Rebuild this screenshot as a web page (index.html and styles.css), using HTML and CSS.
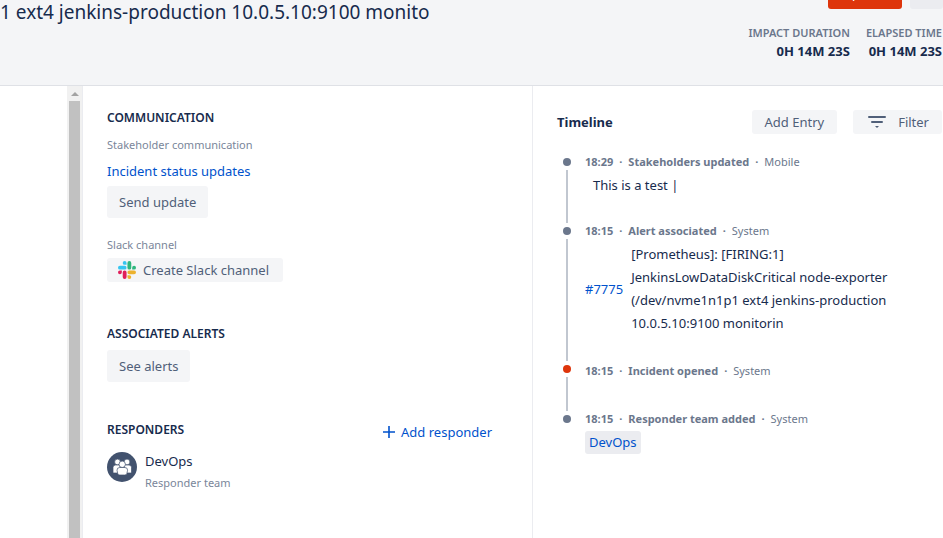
FILE: index.html
```html
<!DOCTYPE html>
<html lang="en">
<head>
<meta charset="utf-8">
<meta name="viewport" content="width=device-width, initial-scale=1">
<title>Incident details</title>
<link rel="stylesheet" href="styles.css">
</head>
<body>
<header class="header">
  <h1 class="title">1 ext4 jenkins-production 10.0.5.10:9100 monito</h1>
  <div class="summary">
    <div class="actions">
      <button class="btn btn-danger" type="button">Update</button>
      <button class="btn btn-more" type="button" aria-label="More"></button>
    </div>
    <dl class="stats">
      <div><dt>IMPACT DURATION</dt><dd>0H 14M 23S</dd></div>
      <div><dt>ELAPSED TIME</dt><dd>0H 14M 23S</dd></div>
    </dl>
  </div>
</header>
<main class="body">
  <div class="gutter"></div>
  <div class="scrollbar"><span class="arrow"></span><span class="thumb"></span></div>
  <section class="details">
    <section class="group">
      <h2>COMMUNICATION</h2>
      <p class="label">Stakeholder communication</p>
      <a class="status-link" href="#updates">Incident status updates</a>
      <button class="btn" type="button">Send update</button>
      <p class="label slack-label">Slack channel</p>
      <button class="btn btn-compact btn-slack" type="button">
        <svg class="slack" viewBox="0 0 122 122" aria-hidden="true">
          <path fill="#e01e5a" d="M26 77a13 13 0 1 1-13-13h13zM32 77a13 13 0 0 1 26 0v32a13 13 0 0 1-26 0z"/>
          <path fill="#36c5f0" d="M45 26a13 13 0 1 1 13-13v13zM45 32a13 13 0 0 1 0 26H13a13 13 0 0 1 0-26z"/>
          <path fill="#2eb67d" d="M96 45a13 13 0 1 1 13 13H96zM90 45a13 13 0 0 1-26 0V13a13 13 0 0 1 26 0z"/>
          <path fill="#ecb22e" d="M77 96a13 13 0 1 1-13 13V96zM77 90a13 13 0 0 1 0-26h32a13 13 0 0 1 0 26z"/>
        </svg>
        Create Slack channel
      </button>
    </section>
    <section class="group group-alerts">
      <h2>ASSOCIATED ALERTS</h2>
      <button class="btn" type="button">See alerts</button>
    </section>
    <section class="group">
      <div class="group-head">
        <h2>RESPONDERS</h2>
        <a class="add" href="#add">
          <svg class="plus" viewBox="0 0 12 12" aria-hidden="true"><path d="M6 0v12M0 6h12" stroke="currentColor" stroke-width="1.6"/></svg>
          Add responder
        </a>
      </div>
      <div class="responder">
        <svg class="avatar" viewBox="0 0 30 30" aria-hidden="true">
          <circle cx="15" cy="15" r="15" fill="#42526e"/>
          <g fill="#fff" stroke="#42526e" stroke-width=".7">
            <circle cx="10.5" cy="10" r="2.9"/><circle cx="20" cy="10" r="2.9"/>
            <path d="M6 21v-5.500q0-2.500 2.500-2.500H13v8zM24.500 21v-5.500q0-2.500-2.500-2.500h-4.500v8z"/>
            <circle cx="15.200" cy="12.300" r="3.200"/>
            <path d="M10 18.200q0-2.700 2.700-2.700h5.200q2.700 0 2.700 2.700l-.8 3.500q-.3 1.300-2 1.300h-5q-1.700 0-2-1.300z"/>
          </g>
        </svg>
        <div>
          <p class="name">DevOps</p>
          <p class="label">Responder team</p>
        </div>
      </div>
    </section>
  </section>
  <section class="timeline">
    <div class="timeline-head">
      <h3>Timeline</h3>
      <button class="btn btn-compact" type="button">Add Entry</button>
      <button class="btn btn-compact btn-filter" type="button">
        <svg class="funnel" viewBox="0 0 18 12" aria-hidden="true"><path d="M1 1h16M4 6h10" fill="none" stroke="currentColor" stroke-width="2" stroke-linecap="round"/><path d="M7 10h4l-2 2z" fill="currentColor"/></svg>
        Filter
      </button>
    </div>
    <ol class="entries">
      <li class="entry">
        <p class="meta"><b>18:29</b><i>·</i><b>Stakeholders updated</b><i>·</i>Mobile</p>
        <p class="text note">This is a test |</p>
      </li>
      <li class="entry associated">
        <p class="meta"><b>18:15</b><i>·</i><b>Alert associated</b><i>·</i>System</p>
        <div class="text alert"><a href="#7775">#7775</a><p>[Prometheus]: [FIRING:1] JenkinsLowDataDiskCritical node-exporter (/dev/nvme1n1p1 ext4 jenkins-production 10.0.5.10:9100 monitorin</p></div>
      </li>
      <li class="entry opened">
        <p class="meta"><b>18:15</b><i>·</i><b>Incident opened</b><i>·</i>System</p>
      </li>
      <li class="entry">
        <p class="meta"><b>18:15</b><i>·</i><b>Responder team added</b><i>·</i>System</p>
        <p class="text"><a class="chip" href="#devops">DevOps</a></p>
      </li>
    </ol>
  </section>
</main>
</body>
</html>
```
FILE: styles.css
```css
* { box-sizing: border-box; }
body, h1, h2, h3, p, dl, dd, ol { margin: 0; padding: 0; }
body {
  display: flex;
  flex-direction: column;
  height: 100vh;
  overflow: hidden;
  font: 13px/20px "Noto Sans", sans-serif;
  color: #172b4d;
  background: #fff;
}
a { color: #0052cc; text-decoration: none; }

.header {
  display: flex;
  justify-content: space-between;
  flex: none;
  background: #f4f5f7;
  border-bottom: 1px solid #dfe1e6;
}
.title { font-size: 19px; line-height: 24px; font-weight: 400; white-space: nowrap; }
.summary { margin-top: -23px; padding-bottom: 24px; }
.actions { display: flex; justify-content: flex-end; gap: 8px; margin-bottom: 16px; }
.stats { display: flex; justify-content: flex-end; gap: 16px; padding-right: 1px; text-align: right; }
dt { font-size: 11px; line-height: 16px; font-weight: 600; color: #6b778c; }
dd { font-size: 13px; line-height: 20px; font-weight: 700; }

.btn {
  display: inline-flex;
  align-items: center;
  justify-content: center;
  height: 32px;
  padding: 0 12px;
  border: 0;
  border-radius: 3px;
  background: #f4f5f7;
  color: #505f79;
  font: inherit;
  white-space: nowrap;
}
.btn-danger { min-width: 74px; background: #de350b; color: #fff; }
.btn-more { width: 33px; background: #ebecf0; }
.btn-compact { height: 24px; padding: 0 13px; }
.btn-slack { gap: 7px; padding-left: 11px; padding-right: 14px; }
.slack { width: 18px; height: 18px; }

.body {
  display: grid;
  grid-template-columns: 67px 16px minmax(0, 450fr) minmax(0, 410fr);
  flex: 1;
  min-height: 0;
}
.scrollbar {
  display: flex;
  flex-direction: column;
  align-items: center;
  gap: 5px;
  padding-top: 6px;
  background: #f1f1f1;
  border-right: 1px solid #ebecf0;
}
.arrow { border: 4px solid transparent; border-top-width: 0; border-bottom-color: #a3a3a3; }
.thumb { flex: 1; width: 11px; background: #c1c1c1; }

.details { padding: 24px; border-right: 1px solid #ebecf0; }
.group { display: flex; flex-direction: column; align-items: flex-start; margin-bottom: 44px; }
.group-alerts { margin-bottom: 40px; }
h2 { font-size: 12px; line-height: 16px; font-weight: 600; }
.group h2 { margin-bottom: 8px; }
.label { font-size: 11px; line-height: 20px; color: #7a869a; }
.group h2 + .label { margin-top: 1px; }
.status-link { margin: 6px 0 5px; }
.slack-label { margin: 17px 0 3px; }
.group-head { display: flex; justify-content: space-between; align-items: flex-start; align-self: stretch; padding-right: 16px; }
.add { display: flex; align-items: center; gap: 6px; line-height: 20px; }
.plus { width: 12px; height: 12px; }
.responder { display: flex; gap: 8px; margin-top: 6px; }
.avatar { width: 30px; height: 30px; }
.name { margin-bottom: 3px; line-height: 18px; }

.timeline { padding: 24px 1px 24px 24px; }
.timeline-head { display: flex; align-items: center; gap: 16px; margin-bottom: 20px; }
h3 { margin-right: auto; font-size: 13px; line-height: 20px; font-weight: 700; }
.btn-filter { gap: 12px; padding-left: 15px; }
.funnel { width: 18px; height: 12px; }

.entries { list-style: none; }
.entry { position: relative; padding: 0 44px 26px 28px; }
.entry::before {
  content: "";
  position: absolute;
  top: 4px;
  left: 6px;
  width: 8px;
  height: 8px;
  border-radius: 50%;
  background: #6b778c;
}
.entry::after {
  content: "";
  position: absolute;
  top: 16px;
  bottom: 0;
  left: 9px;
  width: 2px;
  background: #c1c7d0;
}
.entry:last-child::after { display: none; }
.associated { padding-bottom: 28px; }
.associated::after { bottom: 2px; }
.opened { padding-bottom: 32px; }
.opened::before { top: 2px; background: #de350b; }
.opened::after { top: 14px; }
.meta { font-size: 11px; line-height: 16px; color: #6b778c; white-space: nowrap; }
.meta b { font-weight: 700; }
.meta i { margin: 0 6px; font-style: normal; font-weight: 700; }
.text { margin-top: 4px; line-height: 23px; }
.note { padding-left: 8px; }
.alert { display: flex; align-items: center; gap: 8px; }
.chip { display: inline-block; padding: 0 4px; border-radius: 3px; background: #ebecf0; }
```
